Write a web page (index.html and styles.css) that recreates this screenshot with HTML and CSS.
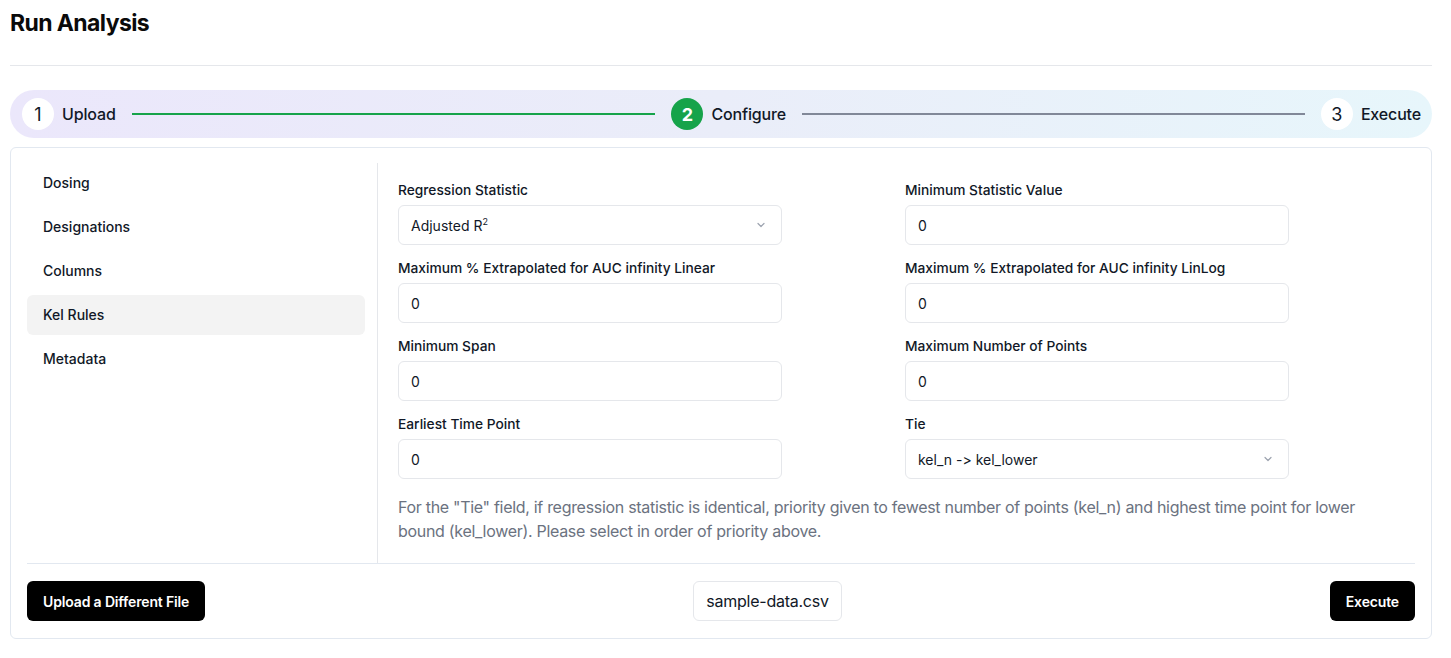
FILE: index.html
```html
<!DOCTYPE html>
<html>
<head>
<meta charset="utf-8">
<link rel="stylesheet" href="styles.css">
</head>
<body>
<div class="page">
  <h1 class="title">Run Analysis</h1>
  <hr class="rule">
  <div class="stepper">
    <div class="step step-grow"><span class="dot">1</span><span class="step-label">Upload</span><div class="line line-done"></div></div>
    <div class="step step-grow"><span class="dot dot-active">2</span><span class="step-label">Configure</span><div class="line line-todo"></div></div>
    <div class="step"><span class="dot">3</span><span class="step-label">Execute</span></div>
  </div>
  <div class="card">
    <div class="card-body">
      <nav class="sidebar">
        <div class="nav-item">Dosing</div>
        <div class="nav-item">Designations</div>
        <div class="nav-item">Columns</div>
        <div class="nav-item nav-active">Kel Rules</div>
        <div class="nav-item">Metadata</div>
      </nav>
      <section class="content">
        <div class="grid">
          <div class="field">
            <label class="label">Regression Statistic</label>
            <div class="input select"><span>Adjusted R<sup>2</sup></span>
              <svg class="chev" width="12" height="12" viewBox="0 0 12 12"><path d="M3 4.5 L6 7.5 L9 4.5" fill="none" stroke="#9ca3af" stroke-width="1.2" stroke-linecap="round" stroke-linejoin="round"/></svg>
            </div>
          </div>
          <div class="field">
            <label class="label">Minimum Statistic Value</label>
            <div class="input">0</div>
          </div>
          <div class="field">
            <label class="label">Maximum % Extrapolated for AUC infinity Linear</label>
            <div class="input">0</div>
          </div>
          <div class="field">
            <label class="label">Maximum % Extrapolated for AUC infinity LinLog</label>
            <div class="input">0</div>
          </div>
          <div class="field">
            <label class="label">Minimum Span</label>
            <div class="input">0</div>
          </div>
          <div class="field">
            <label class="label">Maximum Number of Points</label>
            <div class="input">0</div>
          </div>
          <div class="field">
            <label class="label">Earliest Time Point</label>
            <div class="input">0</div>
          </div>
          <div class="field">
            <label class="label">Tie</label>
            <div class="input select"><span>kel_n -&gt; kel_lower</span>
              <svg class="chev" width="12" height="12" viewBox="0 0 12 12"><path d="M3 4.5 L6 7.5 L9 4.5" fill="none" stroke="#9ca3af" stroke-width="1.2" stroke-linecap="round" stroke-linejoin="round"/></svg>
            </div>
          </div>
        </div>
        <p class="help">For the "Tie" field, if regression statistic is identical, priority given to fewest number of points (kel_n) and highest time point for lower bound (kel_lower). Please select in order of priority above.</p>
      </section>
    </div>
    <div class="footer">
      <button class="btn btn-dark">Upload a Different File</button>
      <div class="file">sample-data.csv</div>
      <button class="btn btn-dark">Execute</button>
    </div>
  </div>
</div>
</body>
</html>
```

FILE: styles.css
```css
* { box-sizing: border-box; }
html, body { margin: 0; padding: 0; background: #fff; }
body {
  font-family: Inter, "Noto Sans", "Liberation Sans", sans-serif;
  font-feature-settings: "calt" 0;
  color: #111827;
}
.page { padding: 7px 19px 0 10px; }
.title {
  margin: 0;
  font-size: 23px;
  line-height: 32px;
  font-weight: 700;
  letter-spacing: -0.6px;
  color: #0a0a0a;
}
.rule {
  margin: 26px 0 24px 0;
  border: 0;
  border-top: 1px solid #e5e7eb;
  height: 0;
}
.stepper {
  display: flex;
  align-items: center;
  height: 48px;
  padding: 0 11px 0 12px;
  border-radius: 24px;
  background: linear-gradient(to right, #ebe7fb 0%, #eaedf9 50%, #e7f6fb 100%);
}
.step { display: flex; align-items: center; gap: 8px; }
.step-grow { flex: 1; }
.dot {
  flex: none;
  width: 32px; height: 32px; border-radius: 50%;
  background: #fff;
  display: flex; align-items: center; justify-content: center;
  font-size: 18px; color: #111827;
}
.dot-active { background: #16a34a; color: #fff; font-weight: 700; }
.step-label { font-size: 16px; font-weight: 500; color: #111827; letter-spacing: -0.15px; }
.line { flex: 1; height: 2px; margin: 0 16px 0 8px; }
.line-done { background: #16a34a; }
.line-todo { background: #818898; }
.card {
  margin-top: 9px;
  border: 1px solid #e2e8f0;
  border-radius: 6px;
  padding: 15px 16px 17px 16px;
}
.card-body {
  display: flex;
  border-bottom: 1px solid #e2e8f0;
}
.sidebar {
  width: 351px;
  padding-right: 12px;
  border-right: 1px solid #e5e7eb;
  display: flex;
  flex-direction: column;
  gap: 4px;
  padding-bottom: 12px;
}
.nav-item {
  height: 40px;
  line-height: 40px;
  padding-left: 16px;
  font-size: 14px;
  font-weight: 500;
  border-radius: 6px;
  color: #111827;
}
.nav-active { background: #f3f3f3; }
.content { flex: 1; padding: 17px 0 20px 20px; }
.grid {
  display: grid;
  grid-template-columns: 507px 507px;
  row-gap: 13px;
}
.field { display: flex; flex-direction: column; }
.label {
  font-size: 13.75px;
  font-weight: 500;
  line-height: 20px;
  height: 20px;
  margin-bottom: 5px;
  color: #111827;
}
.input {
  width: 384px;
  height: 40px;
  border: 1px solid #e5e7eb;
  border-radius: 6px;
  padding: 0 12px;
  display: flex;
  align-items: center;
  font-size: 14px;
  color: #111827;
}
.select { justify-content: space-between; padding-right: 14px; }
.input sup { font-size: 9px; vertical-align: 6px; line-height: 0; }
.help {
  margin: 16px 0 0 0;
  max-width: 990px;
  font-size: 16px;
  line-height: 24px;
  letter-spacing: -0.3px;
  color: #6b7280;
}
.footer {
  display: flex;
  justify-content: space-between;
  align-items: center;
  padding-top: 17px;
}
.btn {
  height: 40px;
  border: 0;
  border-radius: 6px;
  font-family: inherit;
  font-size: 14px;
  font-weight: 600;
  padding: 0 16px;
  letter-spacing: -0.15px;
}
.btn-dark { background: #000; color: #fff; }
.file {
  height: 40px;
  line-height: 38px;
  padding: 0 12px;
  border: 1px solid #e5e7eb;
  border-radius: 6px;
  font-size: 16px;
  letter-spacing: -0.25px;
  color: #111827;
}
```
